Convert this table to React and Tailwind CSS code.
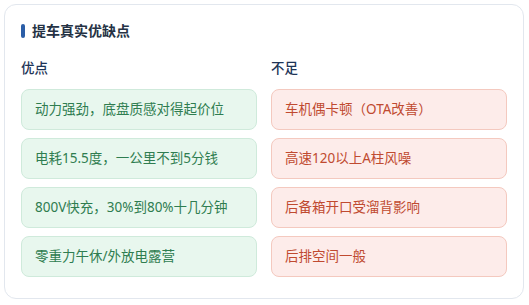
const pros = [
  "动力强劲，底盘质感对得起价位",
  "电耗15.5度，一公里不到5分钱",
  "800V快充，30%到80%十几分钟",
  "零重力午休/外放电露营",
];

const cons = [
  "车机偶卡顿（OTA改善）",
  "高速120以上A柱风噪",
  "后备箱开口受溜背影响",
  "后排空间一般",
];

function Column({ label, items, tone }) {
  const itemClass =
    tone === "good"
      ? "bg-[#e8f7ee] border-[#cfeadb] text-[#2f7d50]"
      : "bg-[#fdecea] border-[#f4c9bf] text-[#c04a30]";

  return (
    <div className="flex flex-col">
      <h3 className="text-[13.5px] leading-5 font-medium text-[#1e3557]">{label}</h3>
      <ul className="mt-[11px] flex flex-col gap-2">
        {items.map((text) => (
          <li
            key={text}
            className={`h-[41px] flex items-center pl-[13px] pr-3 rounded-lg border text-[13.5px] ${itemClass}`}
          >
            {text}
          </li>
        ))}
      </ul>
    </div>
  );
}

export default function App() {
  return (
    <div className="w-[529px] h-[305px] bg-white p-1 font-['Noto_Sans','Noto_Sans_CJK_SC',sans-serif]">
      <div className="w-[520px] h-[295px] rounded-xl border border-[#e2e7ee] bg-white px-4 pt-4">
        {/* Title */}
        <div className="flex items-center gap-[7px] h-5">
          <span className="w-1 h-[14px] rounded-sm bg-[#2b5ea7]" />
          <h2 className="text-sm font-bold text-[#253244]">提车真实优缺点</h2>
        </div>

        <div className="mt-[17px] grid grid-cols-2 gap-[14px]">
          <Column label="优点" items={pros} tone="good" />
          <Column label="不足" items={cons} tone="bad" />
        </div>
      </div>
    </div>
  );
}
